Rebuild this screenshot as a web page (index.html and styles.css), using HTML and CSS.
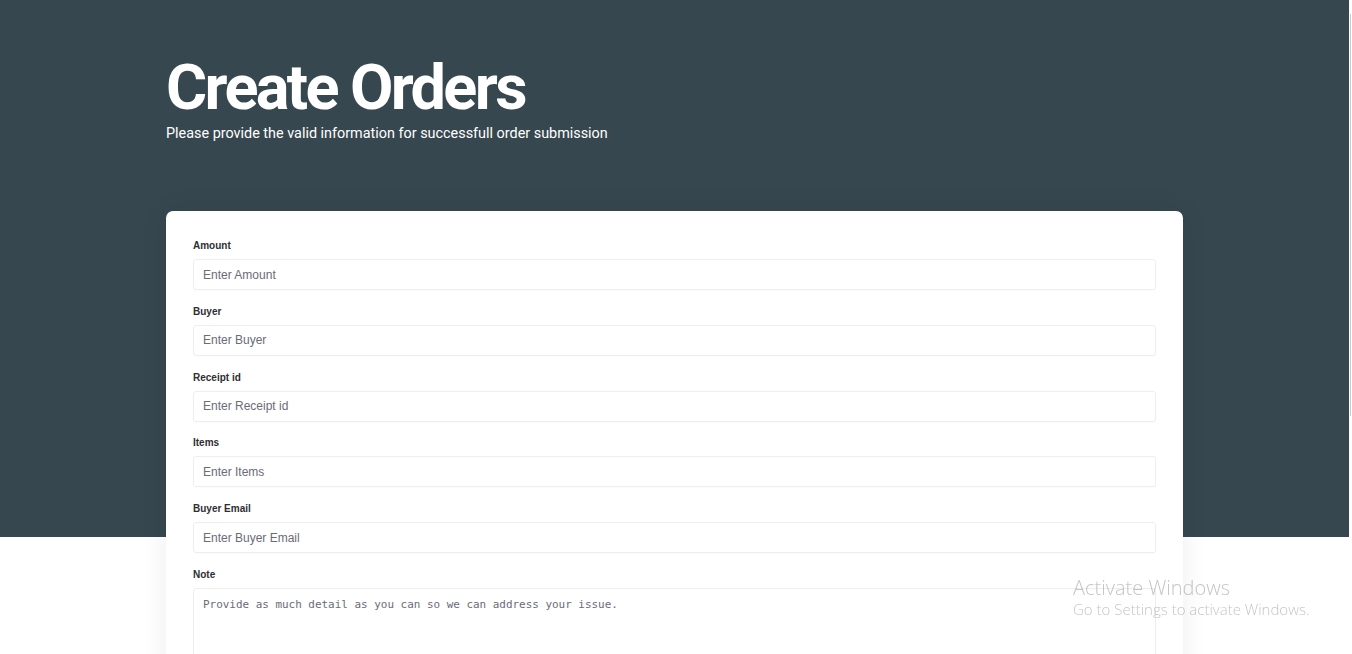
FILE: index.html
```html
<!DOCTYPE html>
<html lang="en">
<head>
<meta charset="utf-8">
<title>Create Orders</title>
<link rel="stylesheet" href="styles.css">
</head>
<body>
<div class="page">
  <header class="hero">
    <div class="hero-inner">
      <h1 class="title">Create Orders</h1>
      <p class="subtitle">Please provide the valid information for successfull order submission</p>
    </div>
  </header>
  <main class="content">
    <form class="card">
      <div class="field">
        <label class="label" for="amount">Amount</label>
        <input class="input" id="amount" type="text" placeholder="Enter Amount">
      </div>
      <div class="field">
        <label class="label" for="buyer">Buyer</label>
        <input class="input" id="buyer" type="text" placeholder="Enter Buyer">
      </div>
      <div class="field">
        <label class="label" for="receipt">Receipt id</label>
        <input class="input" id="receipt" type="text" placeholder="Enter Receipt id">
      </div>
      <div class="field">
        <label class="label" for="items">Items</label>
        <input class="input" id="items" type="text" placeholder="Enter Items">
      </div>
      <div class="field">
        <label class="label" for="email">Buyer Email</label>
        <input class="input" id="email" type="text" placeholder="Enter Buyer Email">
      </div>
      <div class="field">
        <label class="label" for="note">Note</label>
        <textarea class="textarea" id="note" rows="6" placeholder="Provide as much detail as you can so we can address your issue."></textarea>
      </div>
    </form>
  </main>
</div>
<div class="scroll-thumb"></div>
<div class="watermark">
  <div class="wm-title">Activate Windows</div>
  <div class="wm-sub">Go to Settings to activate Windows.</div>
</div>
</body>
</html>
```
FILE: styles.css
```css
html, body {
  margin: 0;
  padding: 0;
  height: 100%;
  overflow: hidden;
  background: #ffffff;
}

body {
  font-family: "Liberation Sans", Arial, sans-serif;
}

.page {
  width: 1349px;
  position: relative;
}

.hero {
  background: #37474f;
  height: 537px;
}

.hero-inner {
  padding: 53px 0 0 166px;
}

.title {
  margin: 0;
  font-family: Roboto, "Liberation Sans", sans-serif;
  font-weight: 700;
  font-size: 63px;
  line-height: 70px;
  color: #ffffff;
  letter-spacing: -2.65px;
}

.subtitle {
  margin: 2px 0 0 0;
  font-family: Roboto, "Liberation Sans", sans-serif;
  font-size: 14.4px;
  line-height: 18px;
  color: #ffffff;
}

.content {
  margin-top: -326px;
  padding-left: 166px;
}

.card {
  width: 1017px;
  box-sizing: border-box;
  background: #ffffff;
  border-radius: 7px;
  padding: 28px 27px 20px 27px;
  box-shadow: 0 0 28px rgba(0, 0, 0, 0.07);
  min-height: 600px;
}

.field {
  display: flex;
  flex-direction: column;
  margin-bottom: 14.8px;
}

.label {
  font-size: 10px;
  font-weight: 700;
  line-height: 14px;
  color: #2e2e33;
  margin-bottom: 6px;
}

.input,
.textarea {
  box-sizing: border-box;
  width: 100%;
  border: 1px solid #eeeeee;
  border-radius: 3px;
  background: #ffffff;
  outline: none;
  box-shadow: 0 1px 2px rgba(0, 0, 0, 0.02);
}

.input {
  height: 31px;
  padding: 0 9px;
  font-family: "Liberation Sans", Arial, sans-serif;
  font-size: 12px;
  color: #333;
}

.input::placeholder {
  color: #6b6b78;
  opacity: 1;
}

.textarea {
  height: 120px;
  padding: 9px 9px;
  font-family: "DejaVu Sans Mono", "Liberation Mono", monospace;
  font-size: 10.95px;
  line-height: 14px;
  resize: none;
}

.textarea::placeholder {
  color: #6b6b78;
  opacity: 1;
}

.scroll-thumb {
  position: fixed;
  top: 14px;
  left: 1350px;
  width: 1px;
  height: 402px;
  background: #c9cccd;
}

.watermark {
  position: fixed;
  left: 1073px;
  top: 575px;
  font-family: "Open Sans", "Noto Sans", sans-serif;
  color: rgba(140, 140, 140, 0.5);
  pointer-events: none;
}

.wm-title {
  font-size: 20px;
  font-weight: 300;
  line-height: 25px;
}

.wm-sub {
  font-size: 15px;
  font-weight: 300;
  line-height: 19px;
}
```
